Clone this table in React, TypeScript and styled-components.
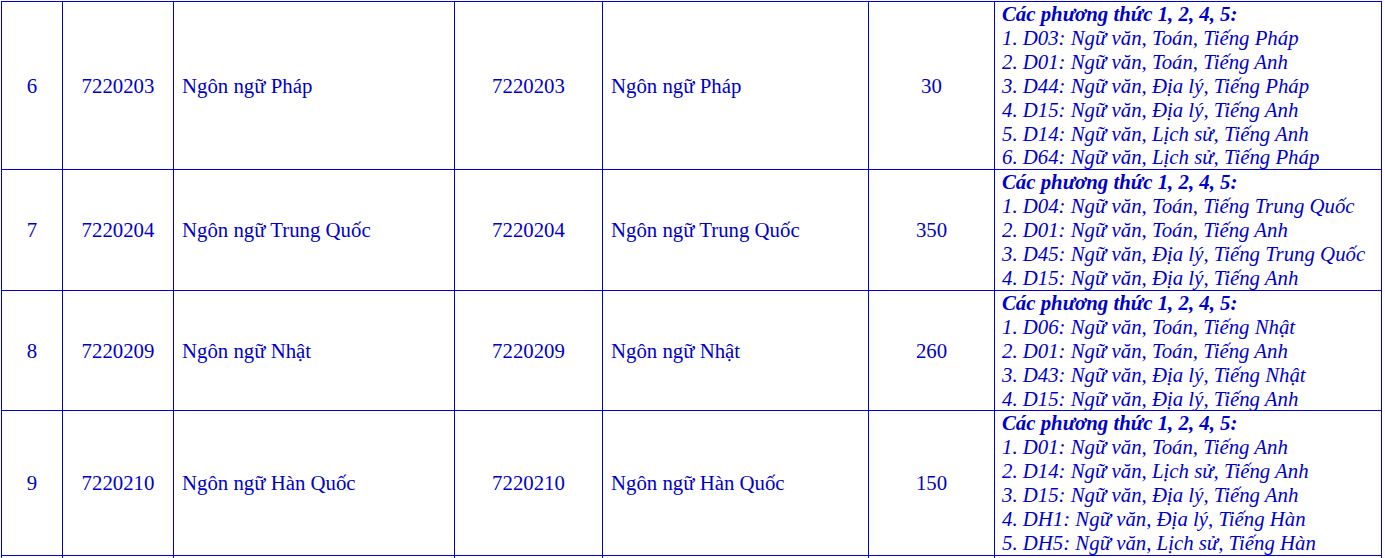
import { FC } from 'react';
import styled, { createGlobalStyle } from 'styled-components';

const GlobalStyle = createGlobalStyle`
  html, body {
    margin: 0;
    padding: 0;
    background: #ffffff;
  }
  body {
    font-family: 'Liberation Serif', 'Times New Roman', serif;
    color: #0000cc;
  }
`;

const Page = styled.div`
  padding: 1px 0 0 1px;
`;

const Table = styled.table`
  width: 1380px;
  border-collapse: collapse;
  table-layout: fixed;
`;

const Row = styled.tr<{ $height?: number }>`
  height: ${(p) => (p.$height ? `${p.$height}px` : 'auto')};
`;

const Cell = styled.td<{ $align?: 'left' | 'center' }>`
  border: 1px solid #0000e6;
  padding: 0 8px;
  text-align: ${(p) => p.$align || 'center'};
  vertical-align: middle;
  font-size: 20.8px;
  line-height: 23.9px;
  color: #0000cc;
`;

const CombCell = styled.td`
  border: 1px solid #0000e6;
  padding: 0 4px 0 7px;
  vertical-align: top;
  font-size: 20.8px;
  line-height: 23.9px;
  font-style: italic;
  color: #0000cc;
  white-space: nowrap;
`;

const CombTitle = styled.div`
  font-weight: bold;
`;

const CombLine = styled.div``;

type Major = {
  no: number;
  code: string;
  name: string;
  quota: number;
  combos: string[];
};

const majors: Major[] = [
  {
    no: 6,
    code: '7220203',
    name: 'Ngôn ngữ Pháp',
    quota: 30,
    combos: [
      '1. D03: Ngữ văn, Toán, Tiếng Pháp',
      '2. D01: Ngữ văn, Toán, Tiếng Anh',
      '3. D44: Ngữ văn, Địa lý, Tiếng Pháp',
      '4. D15: Ngữ văn, Địa lý, Tiếng Anh',
      '5. D14: Ngữ văn, Lịch sử, Tiếng Anh',
      '6. D64: Ngữ văn, Lịch sử, Tiếng Pháp',
    ],
  },
  {
    no: 7,
    code: '7220204',
    name: 'Ngôn ngữ Trung Quốc',
    quota: 350,
    combos: [
      '1. D04: Ngữ văn, Toán, Tiếng Trung Quốc',
      '2. D01: Ngữ văn, Toán, Tiếng Anh',
      '3. D45: Ngữ văn, Địa lý, Tiếng Trung Quốc',
      '4. D15: Ngữ văn, Địa lý, Tiếng Anh',
    ],
  },
  {
    no: 8,
    code: '7220209',
    name: 'Ngôn ngữ Nhật',
    quota: 260,
    combos: [
      '1. D06: Ngữ văn, Toán, Tiếng Nhật',
      '2. D01: Ngữ văn, Toán, Tiếng Anh',
      '3. D43: Ngữ văn, Địa lý, Tiếng Nhật',
      '4. D15: Ngữ văn, Địa lý, Tiếng Anh',
    ],
  },
  {
    no: 9,
    code: '7220210',
    name: 'Ngôn ngữ Hàn Quốc',
    quota: 150,
    combos: [
      '1. D01: Ngữ văn, Toán, Tiếng Anh',
      '2. D14: Ngữ văn, Lịch sử, Tiếng Anh',
      '3. D15: Ngữ văn, Địa lý, Tiếng Anh',
      '4. DH1: Ngữ văn, Địa lý, Tiếng Hàn',
      '5. DH5: Ngữ văn, Lịch sử, Tiếng Hàn',
    ],
  },
];

const colWidths = [61, 111, 281, 148, 266, 126, 387];

const App: FC = () => {
  return (
    <>
      <GlobalStyle />
      <Page>
        <Table>
          <colgroup>
            {colWidths.map((w, i) => (
              <col key={i} style={{ width: w }} />
            ))}
          </colgroup>
          <tbody>
            {majors.map((m) => (
              <Row key={m.no}>
                <Cell>{m.no}</Cell>
                <Cell>{m.code}</Cell>
                <Cell $align="left">{m.name}</Cell>
                <Cell>{m.code}</Cell>
                <Cell $align="left">{m.name}</Cell>
                <Cell>{m.quota}</Cell>
                <CombCell>
                  <CombTitle>Các phương thức 1, 2, 4, 5:</CombTitle>
                  {m.combos.map((c) => (
                    <CombLine key={c}>{c}</CombLine>
                  ))}
                </CombCell>
              </Row>
            ))}
            <Row $height={30}>
              <Cell />
              <Cell />
              <Cell />
              <Cell />
              <Cell />
              <Cell />
              <CombCell />
            </Row>
          </tbody>
        </Table>
      </Page>
    </>
  );
};

export default App;
